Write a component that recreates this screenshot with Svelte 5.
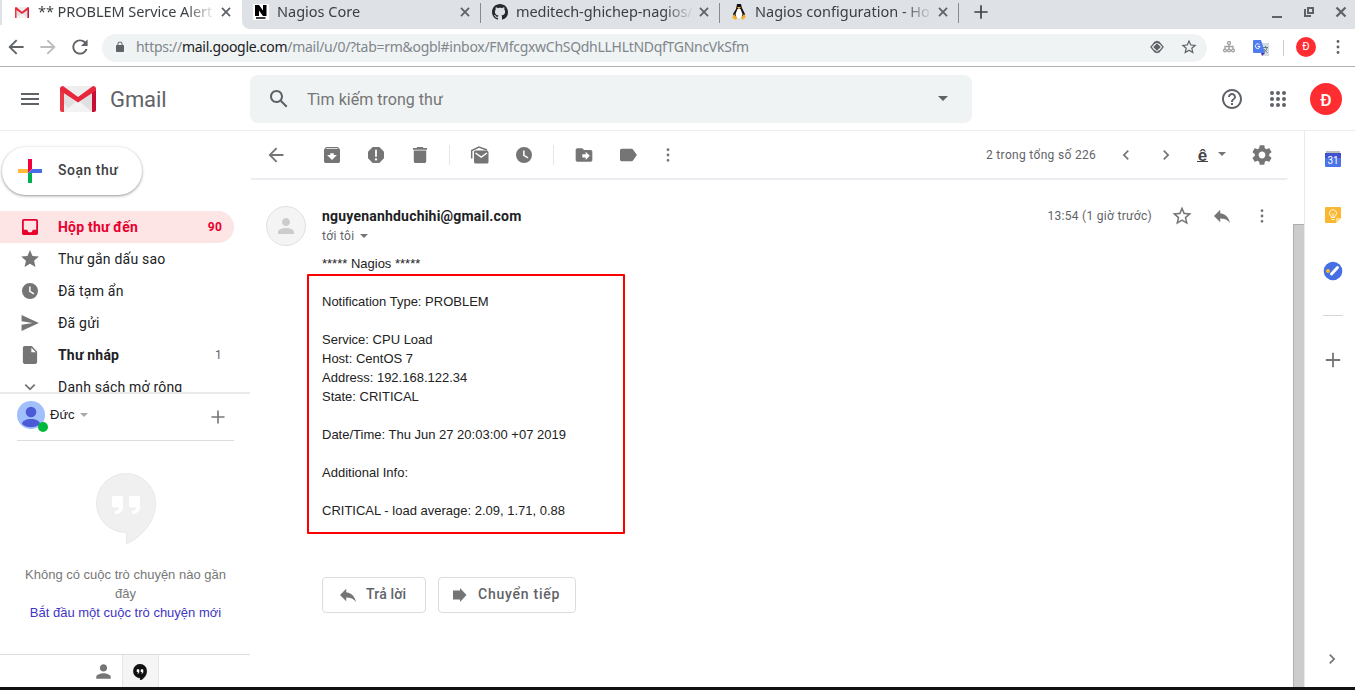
<script>
  const p = {
    menu: 'M3 18h18v-2H3v2zm0-5h18v-2H3v2zm0-7v2h18V6H3z',
    search: 'M20.49 19l-5.73-5.73C15.53 12.2 16 10.91 16 9.5 16 5.91 13.09 3 9.5 3S3 5.91 3 9.5 5.91 16 9.5 16c1.41 0 2.7-.47 3.77-1.24L19 20.49 20.49 19zM5 9.5C5 7.01 7.01 5 9.5 5S14 7.01 14 9.5 11.99 14 9.5 14 5 11.99 5 9.5z',
    back: 'M20 11H7.83l5.59-5.59L12 4l-8 8 8 8 1.41-1.41L7.83 13H20v-2z',
    forward: 'M12 4l-1.41 1.41L16.17 11H4v2h12.17l-5.58 5.59L12 20l8-8z',
    reload: 'M17.65 6.35C16.2 4.9 14.21 4 12 4c-4.42 0-7.99 3.58-7.99 8s3.57 8 7.99 8c3.73 0 6.84-2.55 7.73-6h-2.08c-.82 2.33-3.04 4-5.65 4-3.31 0-6-2.69-6-6s2.69-6 6-6c1.66 0 3.14.69 4.22 1.78L13 11h7V4l-2.35 2.35z',
    lock: 'M18 8h-1V6c0-2.76-2.24-5-5-5S7 3.24 7 6v2H6c-1.1 0-2 .9-2 2v10c0 1.1.9 2 2 2h12c1.1 0 2-.9 2-2V10c0-1.1-.9-2-2-2zm-2.9 0H8.9V6c0-1.71 1.39-3.1 3.1-3.1 1.71 0 3.1 1.39 3.1 3.1v2z',
    help: 'M11 18h2v-2h-2v2zm1-16C6.48 2 2 6.48 2 12s4.48 10 10 10 10-4.48 10-10S17.52 2 12 2zm0 18c-4.41 0-8-3.59-8-8s3.59-8 8-8 8 3.59 8 8-3.59 8-8 8zm0-14c-2.21 0-4 1.79-4 4h2c0-1.1.9-2 2-2s2 .9 2 2c0 2-3 1.75-3 5h2c0-2.25 3-2.5 3-5 0-2.21-1.79-4-4-4z',
    starOutline: 'M22 9.24l-7.19-.62L12 2 9.19 8.63 2 9.24l5.46 4.73L5.82 21 12 17.27 18.18 21l-1.63-7.03L22 9.24zM12 15.4l-3.76 2.27 1-4.28-3.32-2.88 4.38-.38L12 6.1l1.71 4.04 4.38.38-3.32 2.88 1 4.28L12 15.4z',
    star: 'M12 17.27L18.18 21l-1.64-7.03L22 9.24l-7.19-.61L12 2 9.19 8.63 2 9.24l5.46 4.73L5.82 21z',
    archive: 'M20.54 5.23l-1.39-1.68C18.88 3.21 18.47 3 18 3H6c-.47 0-.88.21-1.16.55L3.46 5.23C3.17 5.57 3 6.02 3 6.5V19c0 1.1.9 2 2 2h14c1.1 0 2-.9 2-2V6.5c0-.48-.17-.93-.46-1.27zM12 17.5L6.5 12H10v-2h4v2h3.5L12 17.5zM5.12 5l.81-1h12l.94 1H5.12z',
    report: 'M15.73 3H8.27L3 8.27v7.46L8.27 21h7.46L21 15.73V8.27L15.73 3zM12 18.3c-.72 0-1.3-.58-1.3-1.3s.58-1.3 1.3-1.3 1.3.58 1.3 1.3-.58 1.3-1.3 1.3zm1-4.3h-2V6h2v8z',
    trash: 'M5 19c0 1.1.9 2 2 2h10c1.1 0 2-.9 2-2V7H5v12zM20 4h-4l-1-1H9L8 4H4v2h16V4z',
    clock: 'M12 3a9 9 0 1 0 0 18 9 9 0 0 0 0-18zm4 13l-5-3.2V7h1.7v5l4.2 2.6z',
    moveTo: 'M20 6h-8l-2-2H4c-1.1 0-2 .9-2 2v12c0 1.1.9 2 2 2h16c1.1 0 2-.9 2-2V8c0-1.1-.9-2-2-2zm-6 12v-3h-4v-4h4V8l5 5-5 5z',
    label: 'M17.63 5.84C17.27 5.33 16.67 5 16 5H5C3.9 5 3 5.9 3 7v10c0 1.1.9 2 2 2h11c.67 0 1.27-.33 1.63-.84L22 12l-4.37-6.16z',
    more: 'M12 7.6a1.6 1.6 0 1 0 0-3.2 1.600 1.600 0 0 0 0 3.200zm0 6a1.600 1.600 0 1 0 0-3.200 1.600 1.600 0 0 0 0 3.200zm0 6a1.600 1.600 0 1 0 0-3.200 1.600 1.600 0 0 0 0 3.200z',
    left: 'M15.41 7.41L14 6l-6 6 6 6 1.41-1.41L10.83 12z',
    right: 'M10 6L8.59 7.41 13.17 12l-4.58 4.59L10 18l6-6z',
    down: 'M16.59 8.59L12 13.17 7.41 8.59 6 10l6 6 6-6z',
    gear: 'M19.43 12.98c.04-.32.07-.64.07-.98s-.03-.66-.07-.98l2.11-1.65c.19-.15.24-.42.12-.64l-2-3.46c-.12-.22-.39-.3-.61-.22l-2.49 1c-.52-.4-1.08-.73-1.69-.98l-.38-2.65C14.46 2.18 14.25 2 14 2h-4c-.25 0-.46.18-.49.42l-.38 2.65c-.61.25-1.17.59-1.69.98l-2.49-1c-.23-.09-.49 0-.61.22l-2 3.46c-.13.22-.07.49.12.64l2.11 1.65c-.04.32-.07.65-.07.98s.03.66.07.98l-2.11 1.65c-.19.15-.24.42-.12.64l2 3.46c.12.22.39.3.61.22l2.49-1c.52.4 1.08.73 1.69.98l.38 2.65c.03.24.24.42.49.42h4c.25 0 .46-.18.49-.42l.38-2.65c.61-.25 1.17-.59 1.69-.98l2.49 1c.23.09.49 0 .61-.22l2-3.46c.12-.22.07-.49-.12-.64l-2.11-1.65zM12 15.5c-1.93 0-3.5-1.57-3.5-3.5s1.57-3.5 3.5-3.5 3.5 1.57 3.5 3.5-1.57 3.5-3.5 3.5z',
    reply: 'M10 9V5l-7 7 7 7v-4.1c5 0 8.5 1.6 11 5.1-1-5-4-10-11-11z',
    inbox: 'M19 3H5a2 2 0 0 0-2 2v14c0 1.1.9 2 2 2h14a2 2 0 0 0 2-2V5a2 2 0 0 0-2-2zm0 12h-4c0 1.66-1.35 3-3 3s-3-1.34-3-3H5V5h14v10z',
    send: 'M2.5 21L22 12 2.5 3v7l12.5 2-12.5 2z',
    file: 'M6 2c-1.1 0-2 .9-2 2v16c0 1.1.9 2 2 2h12c1.1 0 2-.9 2-2V8l-6-6H6zm7.5 7V3.8L18.7 9z',
    plus: 'M20 13h-7v7h-2v-7H4v-2h7V4h2v7h7z',
    close: 'M19 6.9L17.1 5 12 10.1 6.9 5 5 6.9 10.1 12 5 17.1 6.9 19 12 13.9 17.1 19 19 17.1 13.9 12z',
    person: 'M12 12c2.21 0 4-1.79 4-4s-1.79-4-4-4-4 1.79-4 4 1.79 4 4 4zm0 2c-2.67 0-8 1.34-8 4v2h16v-2c0-2.66-5.33-4-8-4z'
  };

  const folders = [
    { name: 'Hộp thư đến', icon: 'inbox', count: '90', active: true },
    { name: 'Thư gắn dấu sao', icon: 'star' },
    { name: 'Đã tạm ẩn', icon: 'clock' },
    { name: 'Đã gửi', icon: 'send' },
    { name: 'Thư nháp', icon: 'file', count: '1', bold: true },
    { name: 'Danh sách mở rộng', icon: 'down' }
  ];

  const report = `Notification Type: PROBLEM

Service: CPU Load
Host: CentOS 7
Address: 192.168.122.34
State: CRITICAL

Date/Time: Thu Jun 27 20:03:00 +07 2019

Additional Info:

CRITICAL - load average: 2.09, 1.71, 0.88`;
</script>

{#snippet icon(name, size = 20, inset = 0.75)}
  <svg width={size} height={size} viewBox="{inset} {inset} {24 - 2 * inset} {24 - 2 * inset}" fill="currentColor" fill-rule="evenodd"><path d={p[name]} /></svg>
{/snippet}

{#snippet envelope(w, h)}
  <svg width={w} height={h} viewBox="0 0 36 26" preserveAspectRatio="none">
    <path fill="#eee" d="M2 0h32v26H2z" />
    <path fill="#d9d9d9" d="M4 6l14 13L32 5v21H13L4 18z" opacity=".65" />
    <path fill="#f3f3f3" d="M4 26l14-12 14 12z" />
    <path fill="#e73843" d="M0 2v22q0 2 2 2h2V6z" />
    <path fill="#c70d34" d="M36 2v22q0 2-2 2h-2V6z" />
    <path fill="#e9273c" d="M0 2Q.7 0 3 0L18 11 33 0q2.5 0 3 2v2.5L18 16.5 0 4.5z" />
  </svg>
{/snippet}

{#snippet hangouts(w, h, fill, mark, edge)}
  <svg width={w} height={h} viewBox="0 0 60 72">
    <path {fill} stroke={edge} d="M30.5 71V59.5A29.5 29.5 0 1 1 59.5 30C59.5 48 47 63 30.5 71z" />
    <path fill={mark} d="M18 23h7q2 0 2 2v9c0 4-3 7-8 7v-3c2.500 0 4-1 4-3.500h-5q-2 0-2-2v-7.500q0-2 2-2zm17 0h7q2 0 2 2v9c0 4-3 7-8 7v-3c2.500 0 4-1 4-3.500h-5q-2 0-2-2v-7.500q0-2 2-2z" />
  </svg>
{/snippet}

<div class="window">
  <div class="tabs">
    <div class="tab active">
      <span class="fav">{@render envelope(14, 11)}</span>
      <span class="title t1">** PROBLEM Service Alert</span>
      <span class="x">{@render icon('close', 14, 1.5)}</span>
    </div>
    <div class="tab after">
      <span class="fav"><svg width="16" height="16"><path fill="#fff" d="M0 0h16v16H0z" /><path d="M2 1h4l4 5.5V1h3.5v11H10L6 6.5V12H2zM3 13.3h9.5v1.5H3z" /></svg></span>
      <span class="title t2">Nagios Core</span>
      <span class="x">{@render icon('close', 14, 1.5)}</span>
    </div>
    <div class="tab">
      <span class="fav"><svg width="16" height="16" viewBox="0 0 16 16" fill="#24292e"><path fill-rule="evenodd" d="M8 0C3.58 0 0 3.58 0 8c0 3.54 2.29 6.53 5.47 7.59.4.07.55-.17.55-.38 0-.19-.01-.82-.01-1.49-2.01.37-2.53-.49-2.69-.94-.09-.23-.48-.94-.82-1.13-.28-.15-.68-.52-.01-.53.63-.01 1.08.58 1.23.82.72 1.21 1.87.87 2.33.66.07-.52.28-.87.51-1.07-1.78-.2-3.64-.89-3.64-3.95 0-.87.31-1.59.82-2.15-.08-.2-.36-1.02.08-2.12 0 0 .67-.21 2.2.82.64-.18 1.32-.27 2-.27s1.36.09 2 .27c1.53-1.04 2.2-.82 2.2-.82.44 1.1.16 1.92.08 2.12.51.56.82 1.27.82 2.15 0 3.07-1.87 3.75-3.65 3.95.29.25.54.73.54 1.48 0 1.07-.01 1.93-.01 2.2 0 .21.15.46.55.38A8.01 8.01 0 0 0 16 8c0-4.42-3.58-8-8-8z" /></svg></span>
      <span class="title t3">meditech-ghichep-nagios/</span>
      <span class="x">{@render icon('close', 14, 1.5)}</span>
    </div>
    <div class="tab">
      <span class="fav"><svg width="16" height="16" viewBox="0 0 16 16"><path fill="#111" d="M6 0h4l1 4 3 6-1 4H3l-1-4 3-5z" /><path fill="#fff" d="M6.5 5h3l2 5-1 4h-5l-1-4z" /><path fill="#f5b22c" d="M6 3h4L8 5.5zM3 10l3 4-1 2-4-2zM13 10l2 3-3.5 3-1.5-2z" /></svg></span>
      <span class="title t4">Nagios configuration - Ho</span>
      <span class="x">{@render icon('close', 14, 1.5)}</span>
    </div>
    <span class="newtab">{@render icon('plus', 18, 1.2)}</span>
    <span class="controls">
      <svg width="12" height="12"><path d="M1 10h10v2H1z" fill="#5f6368" /></svg>
      <svg width="12" height="12" fill="none" stroke="#5f6368" stroke-width="2"><path d="M5 2h5v5H5zM2 3v7h6" /></svg>
      <svg width="12" height="12" stroke="#5f6368" stroke-width="2.2"><path d="M1.5 1.5l9 9m0-9l-9 9" /></svg>
    </span>
  </div>

  <div class="addressbar">
    <span class="nav">{@render icon('back', 20, 1.5)}</span>
    <span class="nav off">{@render icon('forward', 20, 1.5)}</span>
    <span class="nav">{@render icon('reload', 20, 1.5)}</span>
    <div class="url">
      <span class="lock">{@render icon('lock', 12, 0)}</span>
      <span class="address">https://<b>mail.google.com</b>/mail/u/0/?tab=rm&amp;ogbl#inbox/FMfcgxwChSQdhLLHLtNDqfTGNncVkSfm</span>
      <svg width="14" height="14" viewBox="0 0 14 14" fill="none" stroke="#5f6368" stroke-width="1.2"><path d="M5.5 1.5L.9 7l4.6 5.5M8.5 1.5L13.1 7l-4.6 5.5M4.500 3.500L7 1.300l2.500 2.200M4.500 10.500L7 12.700l2.500-2.200" /><path fill="#5f6368" stroke="none" d="M7 3.200L10.800 7 7 10.800 3.200 7z" /></svg>
      <span class="bookmark">{@render icon('starOutline', 16, 1.5)}</span>
    </div>
    <svg class="ext" width="12" height="12" fill="none" stroke="#a0a0a0" stroke-width="1.3"><circle cx="6" cy="2" r="1.5" /><path d="M6 3.5v5M2 8V5.5h8V8" /><circle cx="2" cy="9.5" r="1.4" /><circle cx="6" cy="9.5" r="1.4" /><circle cx="10" cy="9.5" r="1.4" /></svg>
    <svg class="translate" width="16" height="16" viewBox="0 0 16 16"><path fill="#d8dcdf" d="M6 3h10v13h-6z" /><path fill="#4f7df0" d="M1 0h7l4 13H1q-1 0-1-1V1q0-1 1-1z" /><path fill="#4931a8" d="M8 13h4l-3 3z" /><path d="M7 6.5H4.8M6.5 4.7A2.3 2.3 0 1 0 7 6.5" stroke="#fff" fill="none" /><path d="M10 7.5h5M12.5 6v1.5m1.5 0c0 2-1.5 3.5-3 4.5m0-3c1 1.8 2 2.6 3.5 3.5" stroke="#607d8b" fill="none" /></svg>
    <span class="rule"></span>
    <span class="badge small">Đ</span>
    <span class="kebab">{@render icon('more', 20, 1)}</span>
  </div>

  <header>
    <span class="burger">{@render icon('menu', 24, 0)}</span>
    <span class="logo">{@render envelope(36, 26)}</span>
    <span class="brand">Gmail</span>
    <div class="search">
      {@render icon('search', 24, 0)}
      <span class="placeholder">Tìm kiếm trong thư</span>
      <svg width="10" height="5"><path fill="#5f6368" d="M0 0h10L5 5z" /></svg>
    </div>
    <span class="help">{@render icon('help', 24, 0)}</span>
    <svg class="apps" width="16" height="16" fill="#5f6368">
      {#each [2, 8, 14] as y}{#each [2, 8, 14] as x}<circle cx={x} cy={y} r="2" />{/each}{/each}
    </svg>
    <span class="badge">Đ</span>
  </header>

  <div class="content">
    <aside class="sidebar">
      <button class="compose">
        <svg width="24" height="24"><path fill="#ffba3b" d="M0 10h10v4H0z" /><path fill="#f4003d" d="M10 0h4v10l-4 4z" /><path fill="#00b050" d="M10 14h4v10h-4z" /><path fill="#466ee8" d="M14 10h10v4H10z" /></svg>
        <span>Soạn thư</span>
      </button>
      <nav class="folders">
        {#each folders as f}
          <div class="folder" class:active={f.active} class:bold={f.bold}>
            <span class="ico">{@render icon(f.icon, 20, 0.75)}</span>
            <span class="name">{f.name}</span>
            <span class="count">{f.count ?? ''}</span>
          </div>
        {/each}
      </nav>
      <section class="chat">
        <div class="me">
          <span class="face">
            <svg width="28" height="28"><circle cx="14" cy="14" r="14" fill="#a1bffb" /><circle cx="14" cy="11" r="5.3" fill="#4b5bd6" /><path fill="#4b5bd6" d="M5 23c0-3 4-5 9-5s9 2 9 5a14 14 0 0 1-18 0z" /></svg>
            <i></i>
          </span>
          <span class="who">Đức</span>
          <svg width="8" height="4"><path fill="#aaa" d="M0 0h8L4 4z" /></svg>
          <span class="add">{@render icon('plus', 18, 1)}</span>
        </div>
        <div class="empty">
          {@render hangouts(60, 72, '#f0f0f0', '#fff', '#e8e8e8')}
          <p>Không có cuộc trò chuyện nào gần đây</p>
          <a href="#new">Bắt đầu một cuộc trò chuyện mới</a>
        </div>
        <div class="modes">
          <span class="mode">{@render icon('person', 19, 1.5)}</span>
          <span class="mode on">{@render hangouts(14, 16.8, '#111', '#fff', '#111')}</span>
        </div>
      </section>
    </aside>

    <main>
      <div class="toolbar">
        <span class="group g1">{@render icon('back', 20, 1.3)}</span>
        <span class="group g2">{@render icon('archive')}{@render icon('report')}{@render icon('trash')}</span>
        <span class="bar"></span>
        <span class="group g3">
          <svg width="20" height="20" viewBox="0 0 20 20" fill="none"><path d="M1.7 13.5V5.5L9 2l8 3" stroke="#757575" stroke-width="1.5" /><path fill="#757575" d="M5.5 5.500h11q2 0 2 2v9.500q0 1.500-1.500 1.500h-11Q4 18.500 4 17V7q0-1.500 1.500-1.500z" /><path d="M5.500 8L11.300 12l5.700-4" stroke="#fff" stroke-width="1.5" /></svg>
          {@render icon('clock')}
        </span>
        <span class="bar"></span>
        <span class="group g4">{@render icon('moveTo', 20, 0)}{@render icon('label')}</span>
        <span class="group g5">{@render icon('more', 20, 0.75)}</span>
        <span class="pager">2 trong tổng số 226</span>
        <span class="step">{@render icon('left', 20, 0)}</span>
        <span class="step">{@render icon('right', 20, 0)}</span>
        <span class="ime">ê</span>
        <svg class="imecaret" width="8" height="4"><path fill="#757575" d="M0 0h8L4 4z" /></svg>
        <span class="cog">{@render icon('gear', 20, 1.7)}</span>
      </div>

      <article>
        <div class="avatar">{@render icon('person', 24, 0)}</div>
        <div class="message">
          <div class="from">
            <div>
              <div class="sender">nguyenanhduchihi@gmail.com</div>
              <div class="to"><span>tới tôi</span><svg width="8" height="4"><path fill="#757575" d="M0 0h8L4 4z" /></svg></div>
            </div>
            <span class="time">13:54 (1 giờ trước)</span>
            {@render icon('starOutline', 20, 1.5)}
            <span class="replyicon">{@render icon('reply', 20, 0.75)}</span>
            <span class="dots">{@render icon('more', 20, 0.75)}</span>
          </div>
          <div class="stars">***** Nagios *****</div>
          <div class="report">{report}</div>
          <div class="actions">
            <button class="b1">{@render icon('reply', 20, 0.75)}<span>Trả lời</span></button>
            <button class="b2"><svg width="20" height="20"><path fill="#757575" d="M3 5.5h7V3l6.500 7-6.500 7v-2.500H3z" /></svg><span>Chuyển tiếp</span></button>
          </div>
        </div>
      </article>
    </main>
    <div class="scroll"><span></span></div>
    <aside class="addons">
      <svg width="16" height="16"><path fill="#bdbdbd" d="M1 0h14v4H1z" /><path fill="#3f51d0" d="M0 2h16v5H0z" /><path fill="#4a74e8" d="M0 7h16v8q0 1-1 1H1q-1 0-1-1z" /><text x="8" y="13" text-anchor="middle">31</text></svg>
      <svg width="16" height="16"><path fill="#fbb731" d="M1 0h14q1 0 1 1v10l-5 5H1q-1 0-1-1V1q0-1 1-1z" /><path fill="#ffdd83" d="M16 11l-5 5v-5z" /><path fill="none" stroke="#fff" stroke-width=".9" d="M6.3 10.500V9.300a3.500 3.500 0 1 1 3.400 0v1.200zM6.500 12.500h3M8 10V7.500L7 6.500m1 1l1-1" /></svg>
      <svg width="20" height="20"><circle cx="10" cy="10" r="9.3" fill="#466fe4" /><circle cx="5" cy="10" r="2" fill="#fbb731" /><path d="M8.500 13l6-6.500" stroke="#fff" stroke-width="3" stroke-linecap="round" /></svg>
      <span class="sep"></span>
      <span class="more">{@render icon('plus', 18, 2)}</span>
      <span class="collapse">{@render icon('right', 20, 0)}</span>
    </aside>
  </div>
  <footer></footer>
</div>

<style>
  .window { width: 1355px; height: 690px; overflow: hidden; display: flex; flex-direction: column; background: #fff; color: #202124; font-family: Roboto, sans-serif; }
  .window :global(svg) { display: block; flex: none; }
  span { white-space: nowrap; }
  button { background: #fff; padding: 0; font: inherit; }

  .tabs { height: 29px; flex: none; display: flex; background: linear-gradient(90deg, #fff 250px, #dee1e6 250px); font-family: "Noto Sans", sans-serif; font-size: 14.5px; color: #3c4043; }
  .tab { width: 239px; box-sizing: border-box; display: flex; align-items: center; height: 29px; padding: 0 8px 5px 12px; position: relative; background: #dee1e6; }
  .tab:not(.active)::after { content: ""; position: absolute; right: -1px; top: 3px; width: 1px; height: 20px; background: #868a8f; z-index: 1; }
  .tab.active { width: 240px; margin-left: 2px; background: #fff; padding-right: 9px; box-shadow: -2px -4px #dee1e6; }
  .tab.after { width: 238px; border-radius: 0 0 0 8px; padding-left: 11px; }
  .fav { width: 16px; display: flex; justify-content: center; }
  .title { width: 176px; margin-left: 8px; overflow: hidden; line-height: 22px; padding-bottom: 2px; -webkit-mask-image: linear-gradient(90deg, #000 84%, transparent 101%); }
  .t1 { letter-spacing: -0.05px; }
  .t3 { letter-spacing: -0.08px; }
  .x { margin-left: 5px; color: #5f6368; }
  .newtab { height: 24px; margin-left: 14px; display: flex; align-items: center; color: #3c4043; }
  .controls { height: 24px; display: flex; gap: 20px; align-items: center; margin-left: auto; padding-right: 8px; }

  .addressbar { height: 37px; flex: none; border-bottom: 1px solid #b0b1b3; display: flex; align-items: center; padding-left: 6px; color: #5f6368; }
  .nav { margin-right: 12px; padding-bottom: 2px; }
  .off { color: #babcbe; }
  .url { width: 1105px; height: 28px; border-radius: 14px; background: #eff3f4; display: flex; align-items: center; box-sizing: border-box; padding: 0 10px 1px 12px; }
  .address { font: 14px "Noto Sans", sans-serif; margin-left: 10px; margin-right: auto; padding-bottom: 1px; color: #80868b; letter-spacing: -0.288px; }
  .address b { font-weight: 400; color: #202124; }
  .bookmark { margin-left: 17px; }
  .ext { margin-left: 16px; margin-bottom: 1px; }
  .translate { margin-left: 18px; }
  .rule { width: 1px; height: 16px; background: #ccc; margin-left: 14px; }
  .badge { width: 32px; height: 32px; border-radius: 50%; background: #ff2d32; color: #fff; display: flex; justify-content: center; align-items: center; font-size: 18px; line-height: 20px; }
  header .badge { padding-top: 2px; height: 30px; font-weight: 500; font-size: 17px; }
  .badge.small { width: 20px; height: 20px; font-size: 11px; margin: 0 0 1px 12px; }
  .kebab { margin: 0 0 1px 12px; }

  header { height: 63px; flex: none; border-bottom: 1px solid #ebedf2; display: flex; align-items: center; padding-left: 18px; color: #5f6368; }
  .logo { margin-left: 18px; }
  .brand { width: 140px; font-size: 22px; margin-left: 14px; letter-spacing: -0.1px; line-height: 26px; padding-top: 2px; }
  .search { width: 722px; height: 48px; box-sizing: border-box; border-radius: 8px; background: #eff3f4; display: flex; align-items: center; padding: 0 24px 0 17px; }
  .placeholder { font-size: 16px; color: #757575; margin-left: 16px; margin-right: auto; padding-top: 2px; letter-spacing: .03px; }
  .help { margin-left: 248px; }
  .apps { margin-left: 26px; }
  header .badge { margin-left: 24px; }

  .content { flex: 1; display: flex; min-height: 0; }
  .sidebar { width: 250px; display: flex; flex-direction: column; }
  .compose { margin: 16px 0 16px 2px; width: 140px; height: 48px; flex: none; border: 0; border-radius: 24px; display: flex; align-items: center; padding-left: 16px; color: #3c4043; box-shadow: 0 1px 2px rgba(60, 64, 67, .35), 0 1px 3px 1px rgba(60, 64, 67, .16); }
  .compose span { font-size: 14px; font-weight: 500; letter-spacing: .5px; margin-left: 16px; padding-bottom: 2px; }
  .folders { height: 181px; flex: none; overflow: hidden; color: #202124; font-size: 14px; }
  .folder { width: 234px; height: 32px; box-sizing: border-box; display: flex; align-items: center; padding: 0 12px 0 20px; letter-spacing: .2px; border-radius: 0 16px 16px 0; }
  .ico { color: #757575; width: 20px; margin-right: 18px; }
  .count { margin-left: auto; font-size: 12px; color: #5f6368; font-weight: 400; }
  .active.folder { background: #fde4e5; color: #e8002f; font-weight: 700; }
  .active .ico, .active .count { color: inherit; font-weight: 700; }
  .bold { font-weight: 700; }

  .chat { flex: 1; display: flex; flex-direction: column; border-top: 2px solid #ebebeb; font-family: "Liberation Sans", sans-serif; font-size: 13px; }
  .me { height: 47px; box-sizing: border-box; margin: 0 16px 0 17px; border-bottom: 1px solid #ddd; display: flex; align-items: center; padding: 0 7px 4px 0; }
  .face { position: relative; }
  .face i { position: absolute; width: 10px; height: 10px; right: -3px; bottom: -3px; border-radius: 50%; background: #00b93b; }
  .who { margin: 0 5px 0 5px; padding-bottom: 1px; }
  .add { margin-left: auto; color: #777; padding-top: 4px; }
  .empty { height: 213px; display: flex; flex-direction: column; align-items: center; padding: 32px 19px 0 20px; box-sizing: border-box; line-height: 19px; text-align: center; color: #777; }
  .empty p { margin: 20px 0 0; }
  .empty a { color: #4135c4; text-decoration: none; white-space: nowrap; }
  .modes { height: 32px; border-top: 1px solid #ddd; display: flex; padding-left: 85px; color: #757575; }
  .mode { width: 37px; height: 32px; display: flex; align-items: center; justify-content: center; padding-top: 1px; box-sizing: border-box; }
  .mode.on { background: #f5f5f5; border: solid #e6e6e6; border-width: 0 1px; padding: 2px 1px 0 0; }

  main { width: 1038px; }
  .toolbar { height: 47px; border-bottom: 2px solid #ebedf1; border-radius: 0 0 3px 3px; display: flex; align-items: center; padding-left: 16px; color: #757575; }
  .group { display: flex; gap: 24px; }
  .g2 { margin-left: 36px; }
  .bar { width: 1px; height: 20px; background: #e6e6e6; margin: 0 20px 0 19px; }
  .g5 { margin-left: 20px; }
  .pager { width: 110px; margin-left: 308px; font-size: 12px; letter-spacing: .32px; color: #5f6368; }
  .step { margin-left: 20px; }
  .ime { margin-left: 21px; width: 11px; height: 11px; font: bold 17px/11px "Liberation Sans", sans-serif; color: #444; border-bottom: 1px solid #444; padding-top: 2px; text-align: center; }
  .imecaret { margin: 0 0 2px 10px; }
  .cog { margin-left: 26px; }

  article { display: flex; padding: 26px 16px 0; }
  .avatar { width: 38px; height: 38px; border: 1px solid #e0e0e0; border-radius: 50%; background: #f4f4f4; color: #ccc; display: flex; align-items: center; justify-content: center; margin-right: 16px; }
  .message { flex: 1; }
  .from { height: 48px; display: flex; align-items: flex-start; color: #757575; }
  .sender { color: #202124; font-weight: 700; font-size: 14px; line-height: 20px; letter-spacing: .2px; }
  .to { display: flex; align-items: center; gap: 6px; font-size: 12px; line-height: 20px; letter-spacing: .3px; color: #5f6368; }
  .time { margin: 0 20px 0 auto; font-size: 12px; line-height: 20px; letter-spacing: .3px; color: #5f6368; }
  .replyicon { margin-left: 20px; }
  .dots { margin: 0 0 0 20px; }
  .stars, .report { font: 13px/19px "Liberation Sans", sans-serif; color: #222; }
  .report { width: 299px; margin: 1px 0 0 -15px; padding: 16px 2px 12px 13px; border: 2px solid #f00; border-radius: 1px; white-space: pre; }
  .actions { display: flex; gap: 12px; margin-top: 43px; }
  .actions button { height: 36px; box-sizing: border-box; border: 1px solid #dadce0; border-radius: 4px; display: flex; align-items: center; color: #757575; }
  .actions span { color: #5f6368; font-size: 14px; font-weight: 500; padding-bottom: 2px; }
  .b1 { width: 104px; padding-left: 15px; }
  .b2 { width: 138px; padding-left: 11px; }
  .b1 span { margin-left: 8px; letter-spacing: .2px; }
  .b2 span { margin-left: 8px; letter-spacing: .75px; }

  .scroll { width: 16px; display: flex; }
  .scroll span { width: 10px; margin: 93px 0 0 5px; border: solid #afafaf; border-width: 1px 0 0 1px; background: #ccc; }
  .addons { flex: 1; border-left: 1px solid #e9e9ee; display: flex; flex-direction: column; align-items: center; padding: 20px 0 18px 6px; color: #757575; }
  .addons > svg:nth-child(2) { margin-top: 40px; }
  .addons > svg:nth-child(3) { margin-top: 38px; }
  .addons text { font: 10px Roboto, sans-serif; fill: #fff; }
  .sep { width: 20px; height: 1px; background: #d6d6d6; margin-top: 34px; }
  .more { margin-top: 35px; }
  .collapse { margin: auto 2px 0 0; }
  footer { height: 3px; flex: none; background: #101214; }
</style>
